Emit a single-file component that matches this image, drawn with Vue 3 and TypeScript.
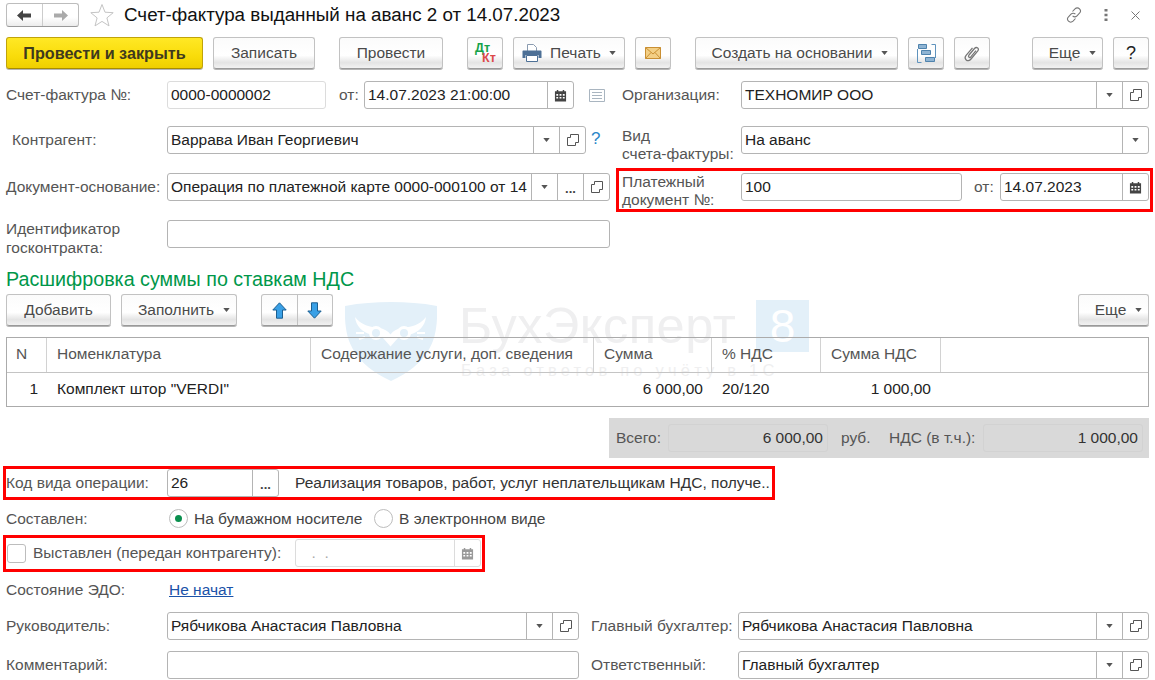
<script setup lang="ts">
const columns: { title: string; cls: string }[] = [
  { title: 'N', cls: 'c-n' },
  { title: 'Номенклатура', cls: '' },
  { title: 'Содержание услуги, доп. сведения', cls: '' },
  { title: 'Сумма', cls: '' },
  { title: '% НДС', cls: '' },
  { title: 'Сумма НДС', cls: '' },
  { title: '', cls: 'c-end' },
]
</script>

<template>
  <div class="page">
    <svg class="defs" width="0" height="0" aria-hidden="true">
      <symbol id="cal" viewBox="0 0 14 14">
        <path fill="currentColor" d="M1 2.500h2V1h1.600v1.500h4.800V1H11v1.500h2V13.500H1z" />
        <path fill="#fff" d="M2.500 5.500h2v1.700h-2zM6 5.500h2v1.700H6zM9.500 5.500h2v1.700h-2zM2.500 8.500h2v1.700h-2zM6 8.500h2v1.700H6zM9.500 8.500h2v1.700h-2z" />
      </symbol>
      <symbol id="open" viewBox="0 0 12 12">
        <path fill="none" stroke="#555" d="M3.500 3.500V.5h8v8h-3M3.500 3.500h-3v8h8v-3" />
      </symbol>
      <symbol id="caret" viewBox="0 0 8 5">
        <path fill="#555" d="M0 0h8L4 5z" />
      </symbol>
    </svg>

    <div class="watermark" aria-hidden="true">
      <svg class="wm-shield" viewBox="0 0 92 79">
        <path fill="#e3f0f9" d="M0 4C16 1 30 0 46 0s30 1 46 4c1 30-4 55-46 75C4 59-1 34 0 4z" />
        <path fill="#fff" d="M10 15c6 8 15 10 24 11 5 .6 9 3 11.500 6.500 2.500-3.500 6.500-5.900 11.500-6.500 9-1 18-3 24-11-1 9-7 15-16 17.500l-8-1-11.500 13-11.500-13-8 1C17 30 11 24 10 15z" />
        <circle cx="31" cy="31" r="5.500" fill="#e3f0f9" stroke="#fff" stroke-width="3" />
        <circle cx="59" cy="31" r="5.500" fill="#e3f0f9" stroke="#fff" stroke-width="3" />
        <path fill="none" stroke="#fff" stroke-width="2" d="M11 31h8M72 31h8M14 37l6-2M78 37l-6-2" />
      </svg>
      <div class="wm-name">БухЭксперт</div>
      <div class="wm-eight">8</div>
      <div class="wm-sub">База ответов по учёту в 1С</div>
    </div>

    <header class="title-row">
      <div class="nav">
        <button class="nav-btn">
          <svg width="15" height="11" viewBox="0 0 15 11"><path fill="#444" d="M0 5.500 6 0v3.500h8v4H6V11z" /></svg>
        </button>
        <button class="nav-btn">
          <svg width="15" height="11" viewBox="0 0 15 11"><path fill="#aaa" d="M15 5.500 9 0v3.500H1v4h8V11z" /></svg>
        </button>
      </div>
      <svg class="star" width="24" height="24" viewBox="0 0 24 24">
        <path fill="#fff" stroke="#c4c4c4" d="M12 1.500l3 7.700 8.200.5-6.300 5.200 2.100 8-7-4.500-7 4.500 2.100-8L.8 9.700 9 9.200z" />
      </svg>
      <h1 class="title">Счет-фактура выданный на аванс 2 от 14.07.2023</h1>
      <div class="win-icons">
        <svg width="16" height="16" viewBox="0 0 16 16" fill="none" stroke="#777" stroke-width="1.100">
          <path d="M6.500 4.500l2.500-2.700c1.300-1.300 3.300-1.300 4.500 0s1.200 3.200 0 4.400L11 8.800c-1.200 1.200-3.200 1.200-4.400 0" />
          <path d="M9.500 11.500l-2.500 2.700c-1.300 1.300-3.300 1.300-4.500 0s-1.200-3.200 0-4.400L5 7.200c1.200-1.200 3.200-1.200 4.400 0" />
        </svg>
        <svg width="4" height="12" viewBox="0 0 4 12" class="kebab"><path fill="#777" d="M.5 0h3v2.500h-3zM.5 4.700h3v2.500h-3zM.5 9.400h3v2.500h-3z" /></svg>
        <svg width="9" height="9" viewBox="0 0 9 9" class="close"><path stroke="#777" d="M.5.500l8 8M8.500.500l-8 8" /></svg>
      </div>
    </header>

    <div class="toolbar">
      <button class="btn primary">Провести и закрыть</button>
      <button class="btn b-write">Записать</button>
      <button class="btn b-post">Провести</button>
      <button class="btn icon dtkt"><span class="dt">Дт</span><span class="kt">Кт</span></button>
      <button class="btn b-print">
        <svg width="20" height="18" viewBox="0 0 20 18">
          <path fill="#fff" stroke="#8a9bb0" d="M5.500.5h6l3 3v5h-9z" />
          <path fill="#4d7096" d="M1.500 6.500h17c.7 0 1 .4 1 1v6.500h-3v-3h-13v3h-3V7.500c0-.6.3-1 1-1z" />
          <path fill="#fff" stroke="#4d7096" d="M4.500 11.500h11v6h-11z" />
        </svg>
        <span>Печать</span><svg class="car" width="7" height="4"><use href="#caret" /></svg>
      </button>
      <button class="btn icon">
        <svg width="16" height="12" viewBox="0 0 16 12">
          <path fill="#f3cf85" stroke="#c98f33" d="M.5.500h15v11H.5z" />
          <path fill="none" stroke="#c98f33" d="M.5.500 8 7l7.500-6.500M.5 11.500l5.500-6M15.500 11.500l-5.500-6" />
        </svg>
      </button>
      <button class="btn b-create">Создать на основании<svg class="car" width="7" height="4"><use href="#caret" /></svg></button>
      <button class="btn icon">
        <svg width="19" height="19" viewBox="0 0 19 19">
          <path fill="none" stroke="#5f93bd" d="M.5 5v13.500h4M18.500 14V.5h-4" />
          <path fill="#8fb4d3" stroke="#4f83ad" d="M1.500.5h8v4h-8zM4.500 6.500h9v4h-9zM8.500 13.500h9v4h-9z" />
        </svg>
      </button>
      <button class="btn icon">
        <svg width="16" height="17" viewBox="0 0 16 17" fill="none" stroke="#777" stroke-width="1.300">
          <path d="M5 10l5.500-6.500c1-1.200 2.300-1.200 3.200-.5s.9 2-.1 3.200l-6.600 7.800c-1.500 1.800-3.500 2-4.800.9s-1.300-3 .1-4.700l6.200-7.400" />
          <path d="M5 10c-.7.900-.6 1.700 0 2.200s1.300.3 2-.5l5-6" />
        </svg>
      </button>
      <button class="btn b-more">Еще<svg class="car" width="7" height="4"><use href="#caret" /></svg></button>
      <button class="btn icon help">?</button>
    </div>

    <section class="top">
      <div class="col-left">
        <div class="row r1">
          <span class="lbl">Счет-фактура №:</span>
          <div class="field w-number faint"><span class="val">0000-0000002</span></div>
          <span class="lbl from">от:</span>
          <div class="field w-datetime">
            <span class="val">14.07.2023 21:00:00</span>
            <span class="fb"><svg width="13" height="13" class="ic-cal"><use href="#cal" /></svg></span>
          </div>
          <svg class="note" width="16" height="13" viewBox="0 0 16 13">
            <path fill="#fff" stroke="#a9b5c0" d="M.5.500h15v12H.5z" />
            <path stroke="#a9b5c0" d="M3 3.500h10M3 6.500h10M3 9.500h10" />
          </svg>
        </div>
        <div class="row r2">
          <span class="lbl indent">Контрагент:</span>
          <div class="field w-partner">
            <span class="val">Варрава Иван Георгиевич</span>
            <span class="fb"><svg width="7" height="4"><use href="#caret" /></svg></span>
            <span class="fb"><svg width="12" height="12"><use href="#open" /></svg></span>
          </div>
          <span class="hint">?</span>
        </div>
        <div class="row r3">
          <span class="lbl">Документ-основание:</span>
          <div class="field grow">
            <span class="val">Операция по платежной карте 0000-000100 от 14</span>
            <span class="fb"><svg width="7" height="4"><use href="#caret" /></svg></span>
            <span class="fb dots">...</span>
            <span class="fb"><svg width="12" height="12"><use href="#open" /></svg></span>
          </div>
        </div>
        <div class="row r4">
          <span class="lbl two">Идентификатор<br />госконтракта:</span>
          <div class="field grow"></div>
        </div>
      </div>

      <div class="col-right">
        <div class="row r1">
          <span class="lbl lbl-r">Организация:</span>
          <div class="field grow">
            <span class="val">ТЕХНОМИР ООО</span>
            <span class="fb"><svg width="7" height="4"><use href="#caret" /></svg></span>
            <span class="fb"><svg width="12" height="12"><use href="#open" /></svg></span>
          </div>
        </div>
        <div class="row r2">
          <span class="lbl lbl-r two">Вид<br />счета-фактуры:</span>
          <div class="field grow">
            <span class="val">На аванс</span>
            <span class="fb"><svg width="7" height="4"><use href="#caret" /></svg></span>
          </div>
        </div>
        <div class="hl hl-pay">
          <div class="row">
            <span class="lbl lbl-r two">Платежный<br />документ №:</span>
            <div class="field w-pay"><span class="val">100</span></div>
            <span class="lbl from2">от:</span>
            <div class="field grow">
              <span class="val">14.07.2023</span>
              <span class="fb"><svg width="13" height="13" class="ic-cal"><use href="#cal" /></svg></span>
            </div>
          </div>
        </div>
      </div>
    </section>

    <h2 class="section-title">Расшифровка суммы по ставкам НДС</h2>

    <div class="table-bar">
      <button class="btn b-add">Добавить</button>
      <button class="btn b-fill">Заполнить<svg class="car" width="7" height="4"><use href="#caret" /></svg></button>
      <div class="btn arrows">
        <span class="arrow">
          <svg width="15" height="17" viewBox="0 0 15 17"><path fill="#39a0e6" stroke="#1c5f91" d="M7.500.8l6.700 7.200H10.500v8.200h-6V8H.8z" /></svg>
        </span>
        <span class="arrow">
          <svg width="15" height="17" viewBox="0 0 15 17"><path fill="#39a0e6" stroke="#1c5f91" d="M7.500 16.200L.8 9h3.700V.8h6V9h3.700z" /></svg>
        </span>
      </div>
      <button class="btn b-more2">Еще<svg class="car" width="7" height="4"><use href="#caret" /></svg></button>
    </div>

    <div class="table">
      <div class="thead">
        <div v-for="c in columns" :key="c.title" class="th" :class="c.cls">{{ c.title }}</div>
      </div>
      <div class="tbody">
        <div class="td c-n r">1</div>
        <div class="td name">Комплект штор "VERDI"</div>
        <div class="td"></div>
        <div class="td r">6 000,00</div>
        <div class="td">20/120</div>
        <div class="td r last">1 000,00</div>
      </div>
    </div>

    <div class="totals">
      <span class="t-lbl t-all">Всего:</span>
      <div class="t-val">6 000,00</div>
      <span class="t-lbl t-rub">руб.</span>
      <span class="t-lbl t-vat">НДС (в т.ч.):</span>
      <div class="t-val">1 000,00</div>
    </div>

    <div class="hl hl-code">
      <span class="lbl">Код вида операции:</span>
      <div class="field w-code">
        <span class="val">26</span>
        <span class="fb dots">...</span>
      </div>
      <span class="code-text">Реализация товаров, работ, услуг неплательщикам НДС, получе..</span>
    </div>

    <div class="radio-row">
      <span class="lbl">Составлен:</span>
      <span class="radio on"></span><span class="radio-text t1">На бумажном носителе</span>
      <span class="radio"></span><span class="radio-text">В электронном виде</span>
    </div>

    <div class="hl hl-issued">
      <span class="check"></span>
      <span class="lbl issued">Выставлен (передан контрагенту):</span>
      <div class="field w-issued disabled">
        <span class="val muted">&nbsp;&nbsp;.&nbsp;&nbsp;.</span>
        <span class="fb"><svg width="13" height="13" class="ic-cal off"><use href="#cal" /></svg></span>
      </div>
    </div>

    <div class="edo-row">
      <span class="lbl">Состояние ЭДО:</span>
      <a class="link">Не начат</a>
    </div>

    <div class="row bottom b1">
      <span class="lbl">Руководитель:</span>
      <div class="field w-boss">
        <span class="val">Рябчикова Анастасия Павловна</span>
        <span class="fb"><svg width="7" height="4"><use href="#caret" /></svg></span>
        <span class="fb"><svg width="12" height="12"><use href="#open" /></svg></span>
      </div>
      <span class="lbl lbl-b">Главный бухгалтер:</span>
      <div class="field grow">
        <span class="val">Рябчикова Анастасия Павловна</span>
        <span class="fb"><svg width="7" height="4"><use href="#caret" /></svg></span>
        <span class="fb"><svg width="12" height="12"><use href="#open" /></svg></span>
      </div>
    </div>
    <div class="row bottom b2">
      <span class="lbl">Комментарий:</span>
      <div class="field w-boss"></div>
      <span class="lbl lbl-b">Ответственный:</span>
      <div class="field grow">
        <span class="val">Главный бухгалтер</span>
        <span class="fb"><svg width="7" height="4"><use href="#caret" /></svg></span>
        <span class="fb"><svg width="12" height="12"><use href="#open" /></svg></span>
      </div>
    </div>
  </div>
</template>

<style>
html, body { margin: 0; background: #fff; overflow: hidden; }
</style>

<style scoped>
.page {
  position: relative;
  isolation: isolate;
  width: 1155px;
  height: 680px;
  box-sizing: border-box;
  padding: 3px 6px 0;
  overflow: hidden;
  background: #fff;
  font: 15.500px/18px "Liberation Sans", Arial, sans-serif;
  color: #222;
}
.defs { position: absolute; }

/* watermark */
.watermark { position: absolute; inset: 0; z-index: -1; }
.wm-shield { position: absolute; left: 345px; top: 302px; width: 92px; height: 79px; }
.wm-name { position: absolute; left: 459px; top: 298px; font-size: 50.500px; line-height: 56px; color: #efeff0; letter-spacing: .5px; white-space: nowrap; }
.wm-eight { position: absolute; left: 756px; top: 300px; width: 53px; height: 52px; background: #e3f0f9; color: #fff; font-size: 46px; line-height: 52px; text-align: center; }
.wm-sub { position: absolute; left: 461px; top: 360px; font-size: 16.500px; line-height: 20px; color: #efeff0; letter-spacing: 4.200px; white-space: nowrap; }

/* title */
.title-row { display: flex; align-items: center; height: 24px; }
.nav { display: flex; width: 73px; height: 24px; box-sizing: border-box; border: 1px solid #bdbdbd; border-bottom-color: #999; border-radius: 3px; background: linear-gradient(#fff 60%, #ececec); }
.nav-btn { flex: 1; display: flex; align-items: center; justify-content: center; padding: 0; border: 0; background: none; }
.nav-btn + .nav-btn { border-left: 1px solid #ccc; }
.star { margin-left: 11px; }
.title { margin: 0 0 0 10px; font-size: 18.800px; line-height: 24px; font-weight: 400; color: #111; white-space: nowrap; }
.win-icons { margin-left: auto; display: flex; align-items: center; padding-right: 1px; }
.kebab { margin-left: 22px; }
.close { margin-left: 23px; margin-right: 8px; }

/* buttons */
.toolbar { display: flex; height: 32px; margin-top: 10px; }
.btn {
  display: flex; align-items: center; justify-content: center;
  box-sizing: border-box; height: 32px; padding: 0;
  border: 1px solid #c2c2c2; border-bottom-color: #9a9a9a; border-radius: 3px;
  background: linear-gradient(#fbfbfb 0, #fff 58%, #e4e4e4 82%, #f2f2f2 100%);
  box-shadow: 0 1px 0 #b5b5b5;
  font: 15.500px/18px "Liberation Sans", Arial, sans-serif;
  color: #4a4a4a;
  white-space: nowrap;
}
.primary { width: 197px; background: linear-gradient(#ffe825, #f9dc0a 60%, #efcf00); border-color: #c0a30a; border-bottom-color: #a88d00; font-weight: 700; font-size: 16.200px; color: #3f3a1e; }
.b-write { width: 102px; margin-left: 10px; }
.b-post { width: 104px; margin-left: 24px; }
.icon { width: 36px; }
.dtkt { margin-left: 24px; position: relative; font-size: 12.500px; font-weight: 700; line-height: 11px; }
.dt { position: absolute; left: 7px; top: 5px; color: #16a34a; }
.kt { position: absolute; left: 14px; top: 15px; color: #dc4a4a; }
.b-print { width: 112px; margin-left: 10px; gap: 8px; }
.car { flex: none; }
.toolbar .icon:nth-child(6) { margin-left: 10px; }
.b-create { width: 203px; margin-left: 24px; gap: 9px; padding-left: 7px; }
.toolbar .icon:nth-child(8) { margin-left: 10px; }
.toolbar .icon:nth-child(9) { margin-left: 10px; }
.b-more { width: 71px; margin-left: 42px; gap: 9px; padding-left: 10px; }
.help { margin-left: 10px; font-size: 18px; color: #222; }

/* top form */
.top { display: flex; margin-top: 12px; }
.col-left { width: 604px; flex: none; }
.col-right { width: 527px; margin-left: 12px; flex: none; }
.row { display: flex; align-items: center; height: 28px; }
.col-left .r2, .col-right .r2 { margin-top: 17px; }
.col-left .r3 { margin-top: 19px; }
.col-left .r4 { margin-top: 19px; }
.lbl { flex: none; width: 161px; color: #555; white-space: nowrap; line-height: 18px; }
.lbl.indent { padding-left: 6px; box-sizing: border-box; }
.lbl.from { width: 25px; margin: 0 0 0 13px; }
.r4 .lbl.two { position: relative; top: 4px; line-height: 19px; }
.lbl-r { width: 119px; }
.r2 .lbl-r { position: relative; top: 5px; }
.hl .lbl-r { position: relative; top: 4px; }
.lbl.from2 { width: 26px; margin: 0 0 0 12px; }
.field {
  flex: none; display: flex; align-items: stretch; box-sizing: border-box;
  height: 28px; border: 1px solid #b4b4b4; border-radius: 3px; overflow: hidden;
}
.field.grow { flex: 1; min-width: 0; }
.val { flex: 1; min-width: 0; padding-left: 3px; line-height: 26px; white-space: nowrap; overflow: hidden; }
.fb { flex: none; width: 26px; display: flex; align-items: center; justify-content: center; border-left: 1px solid #b4b4b4; box-sizing: border-box; color: #444; }
.ic-cal { color: #444; }
.ic-cal.off { color: #999; }
.dots { font-weight: 700; font-size: 13px; padding-bottom: 2px; align-items: flex-end; line-height: 18px; color: #444; }
.faint { border-color: #dcdcdc; }
.w-number { width: 159px; }
.w-datetime { width: 210px; }
.note { margin-left: 15px; }
.w-partner { width: 419px; }
.hint { margin-left: 5px; color: #2a86c8; font-size: 17px; position: relative; top: -1px; }
.w-pay { width: 221px; }

.hl { box-sizing: border-box; border: 3px solid #f00; }
.hl-pay { margin: 14px -4px 0 -6px; padding: 2px 1px 8px 3px; height: 44px; }

.section-title { margin: 20px 0 0; height: 22px; font-size: 19.700px; line-height: 22px; font-weight: 400; color: #00974a; white-space: nowrap; }

.table-bar { display: flex; height: 32px; margin-top: 4px; }
.b-add { width: 105px; }
.b-fill { width: 116px; margin-left: 10px; gap: 9px; padding-left: 10px; }
.arrows { width: 72px; margin-left: 24px; }
.arrow { flex: 1; height: 100%; display: flex; align-items: center; justify-content: center; }
.arrow + .arrow { border-left: 1px solid #c2c2c2; }
.b-more2 { width: 71px; margin-left: auto; gap: 9px; padding-left: 10px; }

/* table */
.table { box-sizing: border-box; height: 70px; margin-top: 11px; border: 1px solid #ababab; }
.thead, .tbody { display: grid; grid-template-columns: 40px 264px 283px 118px 109px 120px 1fr; }
.thead { height: 35px; border-bottom: 1px solid #c4c4c4; box-sizing: border-box; }
.th { box-sizing: border-box; padding-left: 10px; line-height: 31px; color: #555; border-right: 1px solid #d2d2d2; white-space: nowrap; }
.th.c-n { padding-left: 9px; }
.th.c-end { border-right: 0; }
.tbody { height: 33px; line-height: 31px; }
.td { box-sizing: border-box; padding-left: 10px; white-space: nowrap; }
.td.r { padding: 0 9px 0 0; text-align: right; }
.td.last { padding-right: 10px; }

/* totals */
.totals { display: flex; align-items: center; box-sizing: border-box; height: 40px; width: 540px; margin: 11px 0 0 603px; padding: 0 6px 0 7px; background: #d9d9d9; color: #555; }
.t-lbl { flex: none; white-space: nowrap; }
.t-all { width: 52px; }
.t-val { flex: none; width: 160px; box-sizing: border-box; height: 28px; line-height: 26px; border: 1px solid #d2d2d2; border-radius: 3px; text-align: right; padding-right: 4px; color: #333; }
.t-rub { margin-left: 13px; width: 28px; }
.t-vat { margin-left: 20px; width: 94px; }

/* lower */
.hl-code { display: flex; align-items: center; width: 772px; height: 34px; margin: 8px 0 0 -3px; padding: 0; }
.w-code { width: 112px; }
.code-text { margin-left: 16px; white-space: nowrap; color: #333; }
.radio-row { display: flex; align-items: center; height: 19px; margin-top: 9px; }
.radio-row .lbl { width: 163px; }
.radio { flex: none; position: relative; width: 19px; height: 19px; box-sizing: border-box; border: 1px solid #bdbdbd; border-radius: 50%; background: #fff; }
.radio.on::after { content: ""; position: absolute; left: 5px; top: 5px; width: 7px; height: 7px; border-radius: 50%; background: #0a8f4e; }
.radio-text { margin-left: 6px; color: #444; white-space: nowrap; }
.radio-text.t1 { width: 180px; flex: none; }
.hl-issued { display: flex; align-items: center; width: 482px; height: 37px; margin: 7px 0 0 -3px; padding: 1px 0 2px; }
.check { flex: none; width: 19px; height: 19px; margin-left: 1px; box-sizing: border-box; border: 1px solid #bdbdbd; border-radius: 3px; background: #fff; }
.lbl.issued { width: 262px; margin-left: 7px; }
.w-issued { width: 186px; }
.disabled { border-color: #dcdcdc; }
.disabled .fb { border-left-color: #dcdcdc; }
.muted { color: #aaa; padding-left: 7px; }

.edo-row { display: flex; align-items: center; height: 20px; margin-top: 8px; }
.edo-row .lbl { width: 163px; }
.link { color: #1b52a8; text-decoration: underline; }
.bottom.b1 { margin-top: 12px; }
.bottom.b2 { margin-top: 11px; }
.w-boss { width: 412px; }
.lbl-b { width: 147px; margin-left: 12px; }
</style>
